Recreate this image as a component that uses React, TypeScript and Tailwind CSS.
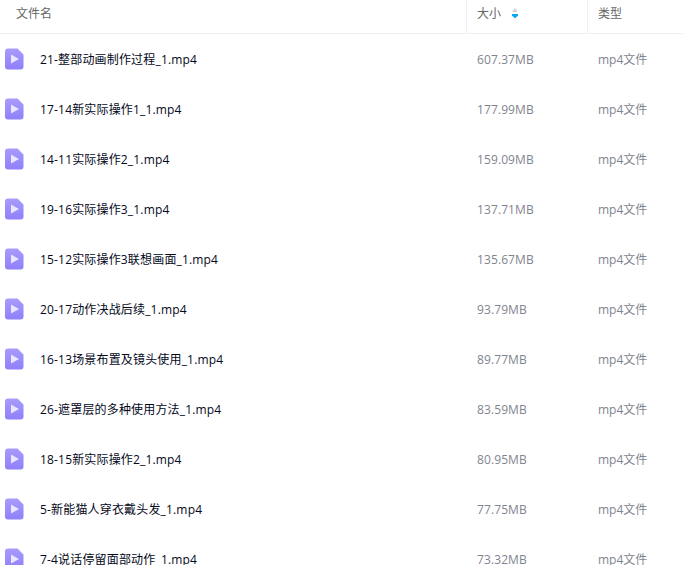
const rows = [
  ["21-整部动画制作过程_1.mp4", "607.37MB"],
  ["17-14新实际操作1_1.mp4", "177.99MB"],
  ["14-11实际操作2_1.mp4", "159.09MB"],
  ["19-16实际操作3_1.mp4", "137.71MB"],
  ["15-12实际操作3联想画面_1.mp4", "135.67MB"],
  ["20-17动作决战后续_1.mp4", "93.79MB"],
  ["16-13场景布置及镜头使用_1.mp4", "89.77MB"],
  ["26-遮罩层的多种使用方法_1.mp4", "83.59MB"],
  ["18-15新实际操作2_1.mp4", "80.95MB"],
  ["5-新能猫人穿衣戴头发_1.mp4", "77.75MB"],
  ["7-4说话停留面部动作_1.mp4", "73.32MB"],
];

function FileIcon() {
  return (
    <svg width="19" height="22" viewBox="0 0 19 22" className="shrink-0">
      <defs>
        <linearGradient id="g" x1="0" y1="0" x2="0" y2="1">
          <stop offset="0" stopColor="#a89bfb" />
          <stop offset="1" stopColor="#8f80fa" />
        </linearGradient>
      </defs>
      <path d="M3 0.5H12.5L18.5 6.5V18.5A3 3 0 0 1 15.5 21.5H3A3 3 0 0 1 0 18.5V3.5A3 3 0 0 1 3 0.5Z" fill="url(#g)" />
      <path d="M6 6.5L14 11L6 15.5Z" fill="#e9e6fe" />
    </svg>
  );
}

export default function App() {
  return (
    <div className="w-[683px] h-[565px] overflow-hidden bg-white text-[12px] leading-[18px] font-['Open_Sans','Noto_Sans_CJK_SC',sans-serif]">
      <div className="flex h-[34px] border-b border-[#f0f0f2] text-[#666] items-stretch">
        <div className="w-[466px] pl-4 flex items-center pb-[6px]">文件名</div>
        <div className="w-[121px] pl-[10px] border-l border-[#f0f0f2] flex items-center gap-[11px] pb-[6px]">
          大小
          <svg width="6" height="11" viewBox="0 0 6 11">
            <path d="M3 0L6 4H0Z" fill="#d4d4d8" />
            <path d="M0 6H6V7.5L3 10.5L0 7.5Z" fill="#06a7ff" />
          </svg>
        </div>
        <div className="flex-1 pl-[10px] border-l border-[#f0f0f2] flex items-center pb-[6px]">类型</div>
      </div>
      {rows.map(([name, size]) => (
        <div key={name} className="flex h-[50px] items-center">
          <div className="w-[466px] flex items-center pl-[5px]">
            <FileIcon />
            <span className="ml-[16px] pt-[2px] tracking-[0.17px] text-[#03081a]">{name}</span>
          </div>
          <div className="w-[121px] pl-[11px] pt-[2px] tracking-[0.1px] text-[#7f8490]">{size}</div>
          <div className="flex-1 pl-[11px] pt-[2px] text-[#7f8490]">mp4文件</div>
        </div>
      ))}
    </div>
  );
}
